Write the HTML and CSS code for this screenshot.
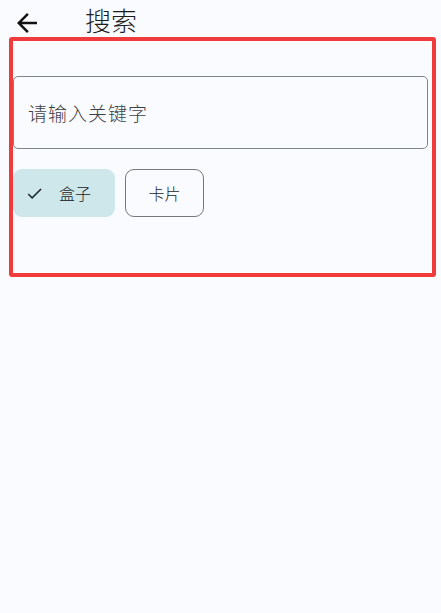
FILE: index.html
```html
<!DOCTYPE html>
<html lang="zh">
<head>
    <meta charset="UTF-8">
    <meta name="viewport" content="width=device-width, initial-scale=1.0">
    <title>搜索</title>
    <link rel="stylesheet" href="styles.css">
</head>
<body>
    <div class="topbar">
        <span class="back">
            <svg viewBox="0 0 24 24" width="30" height="30"><path d="M20 11H7.83l5.59-5.59L12 4l-8 8 8 8 1.41-1.41L7.83 13H20v-2z" fill="#111"/></svg>
        </span>
        <span class="title">搜索</span>
    </div>

    <div class="panel">
        <div class="search-box">请输入关键字</div>
        <div class="chips">
            <div class="chip selected">
                <svg viewBox="0 0 24 24" width="19" height="19"><path d="M9 16.17L4.83 12l-1.42 1.41L9 19 21 7l-1.41-1.41z" fill="#1b2a2e"/></svg>
                <span>盒子</span>
            </div>
            <div class="chip">卡片</div>
        </div>
    </div>
</body>
</html>
```

FILE: styles.css
```css
/* page */
body {
    margin: 0;
    background-color: #fafbff;
    font-family: "Noto Sans CJK SC", "Noto Sans", sans-serif;
    color: #1c1c1c;
}

/* top bar with back arrow */
.topbar {
    display: flex;
    align-items: center;
    height: 37px;
}

.back {
    display: flex;
    margin-left: 12px;
    margin-top: 8px;
}

.title {
    font-size: 26px;
    font-weight: 300;
    margin-left: 43px;
    line-height: 37px;
    margin-top: 2px;
}

/* red outlined area */
.panel {
    margin: 0 5px 0 9px;
    border: 4px solid #ef3b3b;
    border-radius: 3px;
    padding-top: 35px;
    box-sizing: border-box;
    height: 240px;
}

.search-box {
    height: 73px;
    margin-right: 4px;
    border: 1px solid #80858a;
    border-radius: 5px;
    box-sizing: border-box;
    display: flex;
    align-items: center;
    padding-left: 14px;
    font-size: 19px;
    font-weight: 300;
    color: #3e4144;
    letter-spacing: 1px;
}

/* filter chips */
.chips {
    display: flex;
    gap: 10px;
    margin-top: 20px;
}

.chip {
    height: 48px;
    box-sizing: border-box;
    border: 1px solid #76797c;
    border-radius: 9px;
    display: flex;
    align-items: center;
    justify-content: center;
    width: 79px;
    font-size: 16px;
    font-weight: 300;
    color: #1c1c1c;
}

.chip.selected {
    width: 102px;
    border: none;
    background-color: #cee7eb;
    justify-content: flex-start;
    padding-left: 12px;
    gap: 15px;
}
```
